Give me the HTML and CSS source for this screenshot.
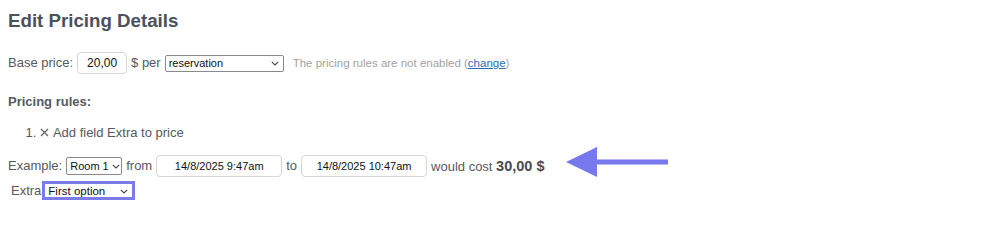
FILE: index.html
```html
<!DOCTYPE html>
<html>
<head>
<meta charset="utf-8">
<title>Edit Pricing Details</title>
<link rel="stylesheet" href="styles.css">
</head>
<body>
<h1 class="title">Edit Pricing Details</h1>

<div class="row base-row">
  <span class="lbl">Base price:</span>
  <input class="txt price" type="text" value="20,00">
  <span class="lbl">$ per</span>
  <span class="sel sel-unit">
    <select><option>reservation</option></select>
    <svg class="chev" width="8" height="5" viewBox="0 0 8 5"><path d="M0.8 0.8 L4 4 L7.2 0.8" fill="none" stroke="#444" stroke-width="1.1"/></svg>
  </span>
  <span class="note">The pricing rules are not enabled (<a href="#" class="link">change</a>)</span>
</div>

<div class="rules-head">Pricing rules:</div>
<ol class="rules">
  <li><svg class="remove" width="9" height="9" viewBox="0 0 9 9"><path d="M1 1 L8 8 M8 1 L1 8" stroke="#666" stroke-width="1.3" fill="none"/></svg> Add field Extra to price</li>
</ol>

<div class="row example-row">
  <span class="lbl">Example:</span>
  <span class="sel sel-room">
    <select><option>Room 1</option></select>
    <svg class="chev" width="8" height="5" viewBox="0 0 8 5"><path d="M0.8 0.8 L4 4 L7.2 0.8" fill="none" stroke="#444" stroke-width="1.1"/></svg>
  </span>
  <span class="lbl">from</span>
  <input class="txt date" type="text" value="14/8/2025 9:47am">
  <span class="lbl">to</span>
  <input class="txt date" type="text" value="14/8/2025 10:47am">
  <span class="lbl">would cost <b class="cost">30,00 $</b></span>
  <svg class="arrow" width="104" height="32" viewBox="0 0 104 32"><path d="M0 16 L31 1 L31 13.5 L102 13.5 L102 18.5 L31 18.5 L31 31 Z" fill="#7878ee"/></svg>
</div>

<div class="row extra-row">
  <span class="lbl">Extra</span>
  <span class="sel sel-extra">
    <select><option>First option</option></select>
    <svg class="chev" width="8" height="5" viewBox="0 0 8 5"><path d="M0.8 0.8 L4 4 L7.2 0.8" fill="none" stroke="#444" stroke-width="1.1"/></svg>
  </span>
</div>
</body>
</html>
```

FILE: styles.css
```css
html, body {
  background: #ffffff;
}
body {
  margin: 8px;
  font-family: "Liberation Sans", Arial, sans-serif;
  font-size: 13px;
  color: #555a60;
}
.title {
  margin: 1px 0 0;
  font-size: 18.7px;
  line-height: 24px;
  font-weight: bold;
  color: #4b515b;
}
.row {
  display: flex;
  align-items: center;
  gap: 4px;
  line-height: 16px;
}
.base-row {
  margin-top: 19px;
  height: 22px;
}
.lbl {
  white-space: nowrap;
}
.txt {
  box-sizing: border-box;
  height: 22px;
  border: 1px solid #d6d6d6;
  border-radius: 4px;
  background: #fff;
  text-align: center;
  color: #111;
  font-family: "Liberation Sans", Arial, sans-serif;
  padding: 0 4px;
  margin: 0;
  outline: none;
}
.price {
  width: 50px;
  font-size: 12px;
}
.date {
  width: 126px;
  font-size: 11px;
  margin: 0;
}
.sel {
  position: relative;
  display: inline-flex;
}
.sel select {
  appearance: none;
  -webkit-appearance: none;
  box-sizing: border-box;
  margin: 0;
  border: 1px solid #8a8a8a;
  border-radius: 2px;
  background: #fff;
  color: #111;
  font-family: "Liberation Sans", Arial, sans-serif;
  font-size: 11px;
  padding: 0 11px 0 3px;
  outline: none;
}
.sel .chev {
  position: absolute;
  top: 50%;
  margin-top: -2px;
  pointer-events: none;
}
.sel-unit select {
  width: 119px;
  height: 17px;
}
.sel-unit .chev {
  right: 5px;
}
.sel-room select {
  width: 56px;
  height: 18px;
  padding: 0 2px 0 3px;
}
.sel-room .chev {
  right: 2px;
}
.sel-extra select {
  width: 93px;
  height: 19px;
  border: 3px solid #7b7be9;
  border-radius: 0;
  font-size: 11.5px;
  padding-left: 3px;
}
.sel-extra .chev {
  right: 7px;
}
.note {
  margin-left: 5px;
  font-size: 11.5px;
  color: #a2a2a2;
  white-space: nowrap;
}
.link {
  color: #2c6cbf;
  text-decoration: underline;
}
.rules-head {
  margin-top: 20px;
  font-weight: bold;
  line-height: 16px;
}
.rules {
  margin: 15px 0 0;
  padding-left: 32px;
  line-height: 16px;
}
.remove {
  vertical-align: 0;
  margin-right: 1px;
}
.example-row {
  position: relative;
  margin-top: 14px;
  height: 22px;
}
.cost {
  font-size: 14.5px;
  color: #474b52;
}
.arrow {
  position: absolute;
  left: 558px;
  top: -9px;
}
.extra-row {
  margin-top: 4px;
  padding-left: 3px;
  gap: 1px;
  height: 19px;
}
```
